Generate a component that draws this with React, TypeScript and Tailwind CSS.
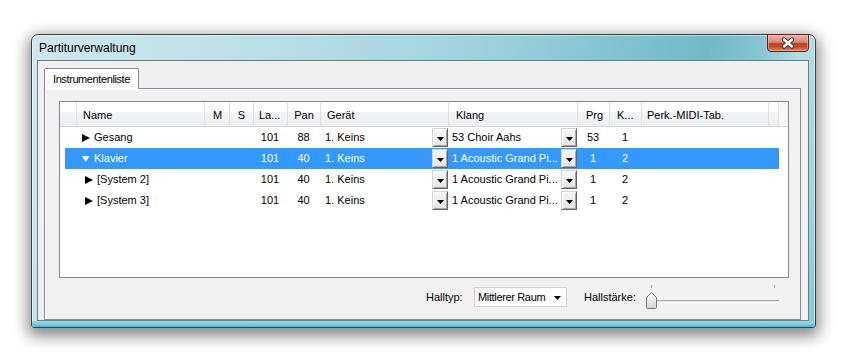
import React from "react";

type Row = {
  name: string;
  indent: string;
  open: boolean;
  la: string;
  pan: string;
  geraet: string;
  klang: string;
  prg: string;
  k: string;
  sel: boolean;
};

const rows: Row[] = [
  { name: "Gesang", indent: "pl-[6px]", open: false, la: "101", pan: "88", geraet: "1. Keins", klang: "53 Choir Aahs", prg: "53", k: "1", sel: false },
  { name: "Klavier", indent: "pl-[6px]", open: true, la: "101", pan: "40", geraet: "1. Keins", klang: "1 Acoustic Grand Pi...", prg: "1", k: "2", sel: true },
  { name: "[System 2]", indent: "pl-[9px]", open: false, la: "101", pan: "40", geraet: "1. Keins", klang: "1 Acoustic Grand Pi...", prg: "1", k: "2", sel: false },
  { name: "[System 3]", indent: "pl-[9px]", open: false, la: "101", pan: "40", geraet: "1. Keins", klang: "1 Acoustic Grand Pi...", prg: "1", k: "2", sel: false },
];

function TreeTri({ open, color }: { open: boolean; color: string }) {
  return (
    <div className="w-[8px] h-[8px] flex items-center shrink-0">
      {open ? (
        <svg width="8" height="6" viewBox="0 0 8 6">
          <polygon points="0,0 7.5,0 3.75,6" fill={color} />
        </svg>
      ) : (
        <svg width="8" height="8" viewBox="0 0 8 8">
          <polygon points="0,0 8,4 0,8" fill={color} />
        </svg>
      )}
    </div>
  );
}

function DropBtn() {
  return (
    <div className="w-[16px] h-[19px] my-[1px] shrink-0 flex items-center justify-center bg-[linear-gradient(#f7f7f7,#e4e4e4)] border border-t-[#d4d4d4] border-l-[#d4d4d4] border-r-[#646464] border-b-[#646464] shadow-[inset_1px_1px_0_#ffffff,inset_-1px_-1px_0_#a6a6a6]">
      <svg width="7" height="4" viewBox="0 0 7 4" className="mt-[2px]">
        <polygon points="0,0 7,0 3.5,4" fill="#000" />
      </svg>
    </div>
  );
}

export default function App() {
  return (
    <div className="w-[860px] h-[362px] bg-white overflow-hidden pt-[34px] pl-[31px] font-['Liberation_Sans',Arial,sans-serif] text-black">
      {/* Window */}
      <div className="relative w-[785px] h-[294px] flex flex-col rounded-t-[7px] rounded-b-[3px] border border-[#2f434b] bg-[linear-gradient(105deg,#cfe7ec_0%,#bde0e7_25%,#a2d4de_50%,#85c6d2_66%,#6fb9c6_79%,#86c6d2_85%,#b3dee6_90%,#a2d6e0_95%,#7ecbdb_100%)] shadow-[0_5px_15px_3px_rgba(0,0,0,0.48),inset_0_0_0_1px_rgba(255,255,255,0.5)]">
        {/* Title bar */}
        <div className="h-[25px] shrink-0 flex items-center pl-[7px] text-[12px] text-black">
          Partiturverwaltung
        </div>

        {/* Close button */}
        <div className="absolute right-[6px] top-[-1px] z-10 w-[42px] h-[18px] rounded-b-[4px] border border-[#5a2318] bg-[linear-gradient(#eab0a2_0%,#d98e7b_45%,#c3452c_52%,#c64d33_75%,#e2875f_100%)] shadow-[inset_0_0_0_1px_rgba(255,210,200,0.45)] flex items-center justify-center">
          <svg width="14" height="12" viewBox="0 0 14 12">
            <path d="M3 2.5 L11 9.5 M11 2.5 L3 9.5" stroke="#3d3d3d" strokeWidth="4.4" strokeLinecap="round" />
            <path d="M3 2.5 L11 9.5 M11 2.5 L3 9.5" stroke="#ffffff" strokeWidth="2.4" strokeLinecap="round" />
          </svg>
        </div>

        {/* Middle: frame + client */}
        <div className="flex-1 min-h-0 flex pl-[5px] pr-[6px]">
          <div className="flex-1 flex flex-col border border-[#647f8a] bg-[#f0f0f0] pl-[6px] pr-[7px] pt-[7px]">
            {/* Tab strip */}
            <div className="flex shrink-0">
              <div className="relative z-10 -mb-[1px] h-[21px] w-[95px] border border-b-0 border-[#898c95] rounded-t-[2px] bg-[linear-gradient(#ffffff,#fafafa)] flex items-center pl-[8px] text-[11px] tracking-[-0.4px]">
                Instrumentenliste
              </div>
            </div>
            {/* Tab panel */}
            <div className="flex-1 flex flex-col border border-[#898c95] bg-[#f1f1f1] shadow-[inset_1px_1px_0_#ffffff]">
              {/* List view */}
              <div className="mt-[12px] ml-[14px] w-[730px] h-[177px] border border-[#828790] bg-white flex flex-col overflow-hidden text-[11px]">
                {/* Header */}
                <div className="h-[25px] shrink-0 flex border-b border-[#d5d5d5] bg-[linear-gradient(#ffffff_0%,#ffffff_40%,#f2f3f5_44%,#eeeff1_100%)]">
                  <div className="w-[16px] shrink-0" />
                  <div className="w-[128px] shrink-0 border-l border-[#dedede] flex items-center pt-[2px] pl-[6px]">Name</div>
                  <div className="w-[25px] shrink-0 border-l border-[#dedede] flex items-center justify-center pt-[2px] pl-[1px]">M</div>
                  <div className="w-[24px] shrink-0 border-l border-[#dedede] flex items-center justify-center pt-[2px]">S</div>
                  <div className="w-[34px] shrink-0 border-l border-[#dedede] flex items-center pt-[2px] pl-[5px]">La...</div>
                  <div className="w-[33px] shrink-0 border-l border-[#dedede] flex items-center justify-center pt-[2px]">Pan</div>
                  <div className="w-[128px] shrink-0 border-l border-[#dedede] flex items-center pt-[2px] pl-[6px]">Gerät</div>
                  <div className="w-[129px] shrink-0 border-l border-[#dedede] flex items-center pt-[2px] pl-[7px]">Klang</div>
                  <div className="w-[32px] shrink-0 border-l border-[#dedede] flex items-center justify-center pt-[2px] pl-[2px]">Prg</div>
                  <div className="w-[32px] shrink-0 border-l border-[#dedede] flex items-center pt-[2px] pl-[7px]">K...</div>
                  <div className="w-[127px] shrink-0 border-l border-[#dedede] flex items-center pt-[2px] pl-[5px]">Perk.-MIDI-Tab.</div>
                  <div className="w-[10px] shrink-0 border-l border-[#dedede]" />
                  <div className="flex-1 border-l border-[#dedede] bg-[#f7f7f7]" />
                </div>
                {/* Rows */}
                {rows.map((r) => {
                  const c = r.sel ? "text-white" : "text-black";
                  return (
                    <div key={r.name} className={`ml-[5px] w-[714px] h-[21px] shrink-0 flex ${r.sel ? "bg-[#3399ff]" : ""} ${c}`}>
                      <div className="w-[11px] shrink-0" />
                      <div className={`w-[128px] shrink-0 flex items-center gap-[4px] ${r.indent}`}>
                        <TreeTri open={r.open} color={r.sel ? "#ffffff" : "#000000"} />
                        <span className="whitespace-nowrap">{r.name}</span>
                      </div>
                      <div className="w-[25px] shrink-0" />
                      <div className="w-[24px] shrink-0" />
                      <div className="w-[34px] shrink-0 flex items-center justify-center">{r.la}</div>
                      <div className="w-[33px] shrink-0 flex items-center justify-center">{r.pan}</div>
                      <div className="w-[128px] shrink-0 flex items-center pl-[5px]">
                        <span className="flex-1 whitespace-nowrap overflow-hidden">{r.geraet}</span>
                        <DropBtn />
                      </div>
                      <div className="w-[129px] shrink-0 flex items-center pl-[4px]">
                        <span className="flex-1 whitespace-nowrap overflow-hidden">{r.klang}</span>
                        <DropBtn />
                      </div>
                      <div className="w-[32px] shrink-0 flex items-center justify-center">{r.prg}</div>
                      <div className="w-[32px] shrink-0 flex items-center justify-center">{r.k}</div>
                      <div className="flex-1" />
                    </div>
                  );
                })}
              </div>

              {/* Bottom controls */}
              <div className="mt-[5px] ml-[381px] flex items-center text-[11px]">
                <div className="w-[48px] shrink-0">Halltyp:</div>
                <div className="w-[93px] h-[20px] shrink-0 flex items-center bg-white border border-[#d2d2d2] pl-[3px] pr-[5px]">
                  <span className="flex-1 whitespace-nowrap tracking-[-0.35px]">Mittlerer Raum</span>
                  <svg width="7" height="4" viewBox="0 0 7 4" className="mt-[1px]">
                    <polygon points="0,0 7,0 3.5,4" fill="#000" />
                  </svg>
                </div>
                <div className="w-[79px] shrink-0 pl-[17px] whitespace-nowrap">Hallstärke:</div>
                <svg width="136" height="28" viewBox="0 0 136 28" className="shrink-0">
                  <defs>
                    <linearGradient id="thumbg" x1="0" y1="0" x2="0" y2="1">
                      <stop offset="0" stopColor="#fbfbfb" />
                      <stop offset="1" stopColor="#d6d6d6" />
                    </linearGradient>
                  </defs>
                  <line x1="5.5" y1="2" x2="5.5" y2="5" stroke="#a8a8a8" strokeWidth="1" />
                  <line x1="128.5" y1="2" x2="128.5" y2="5" stroke="#a8a8a8" strokeWidth="1" />
                  <line x1="0" y1="17.5" x2="133" y2="17.5" stroke="#adadad" strokeWidth="1" />
                  <line x1="0" y1="18.5" x2="133" y2="18.5" stroke="#e3e3e3" strokeWidth="1" />
                  <line x1="0" y1="19.5" x2="133" y2="19.5" stroke="#ffffff" strokeWidth="1" />
                  <path
                    d="M0.5 14.5 L5.5 9.5 L10.5 14.5 L10.5 24.5 Q10.5 25.5 9.5 25.5 L1.5 25.5 Q0.5 25.5 0.5 24.5 Z"
                    fill="url(#thumbg)"
                    stroke="#767676"
                    strokeWidth="1"
                    strokeLinejoin="round"
                  />
                </svg>
              </div>
            </div>
          </div>
        </div>

        {/* Bottom frame */}
        <div className="h-[6px] shrink-0 rounded-b-[2px] bg-[linear-gradient(#a0d8e4,#84cedd_45%,#36c2ea)]" />
      </div>
    </div>
  );
}
